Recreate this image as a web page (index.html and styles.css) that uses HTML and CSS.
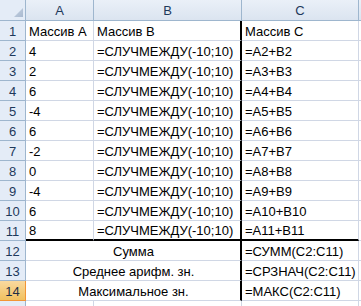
FILE: index.html
```html
<!DOCTYPE html>
<html lang="ru">

<head>
    <meta charset="UTF-8">
    <meta name="viewport" content="width=device-width, initial-scale=1.0">
    <title>Массивы</title>
    <link rel="stylesheet" href="styles.css">
</head>

<body>
    <div class="sheet">
        <!-- заголовки столбцов -->
        <div class="corner"></div>
        <div class="col-head">A</div>
        <div class="col-head">B</div>
        <div class="col-head">C</div>
        <div class="col-head"></div>

        <div class="row-head">1</div>
        <div class="cell">Массив А</div>
        <div class="cell split">Массив В</div>
        <div class="cell">Массив С</div>
        <div class="cell"></div>

        <div class="row-head">2</div>
        <div class="cell">4</div>
        <div class="cell split">=СЛУЧМЕЖДУ(-10;10)</div>
        <div class="cell">=A2+B2</div>
        <div class="cell"></div>

        <div class="row-head">3</div>
        <div class="cell">2</div>
        <div class="cell split">=СЛУЧМЕЖДУ(-10;10)</div>
        <div class="cell">=A3+B3</div>
        <div class="cell"></div>

        <div class="row-head">4</div>
        <div class="cell">6</div>
        <div class="cell split">=СЛУЧМЕЖДУ(-10;10)</div>
        <div class="cell">=A4+B4</div>
        <div class="cell"></div>

        <div class="row-head">5</div>
        <div class="cell">-4</div>
        <div class="cell split">=СЛУЧМЕЖДУ(-10;10)</div>
        <div class="cell">=A5+B5</div>
        <div class="cell"></div>

        <div class="row-head">6</div>
        <div class="cell">6</div>
        <div class="cell split">=СЛУЧМЕЖДУ(-10;10)</div>
        <div class="cell">=A6+B6</div>
        <div class="cell"></div>

        <div class="row-head">7</div>
        <div class="cell">-2</div>
        <div class="cell split">=СЛУЧМЕЖДУ(-10;10)</div>
        <div class="cell">=A7+B7</div>
        <div class="cell"></div>

        <div class="row-head">8</div>
        <div class="cell">0</div>
        <div class="cell split">=СЛУЧМЕЖДУ(-10;10)</div>
        <div class="cell">=A8+B8</div>
        <div class="cell"></div>

        <div class="row-head">9</div>
        <div class="cell">-4</div>
        <div class="cell split">=СЛУЧМЕЖДУ(-10;10)</div>
        <div class="cell">=A9+B9</div>
        <div class="cell"></div>

        <div class="row-head">10</div>
        <div class="cell">6</div>
        <div class="cell split">=СЛУЧМЕЖДУ(-10;10)</div>
        <div class="cell">=A10+B10</div>
        <div class="cell"></div>

        <div class="row-head">11</div>
        <div class="cell total-top">8</div>
        <div class="cell split total-top">=СЛУЧМЕЖДУ(-10;10)</div>
        <div class="cell total-top">=A11+B11</div>
        <div class="cell"></div>

        <div class="row-head">12</div>
        <div class="cell merged split">Сумма</div>
        <div class="cell">=СУММ(C2:C11)</div>
        <div class="cell"></div>

        <div class="row-head">13</div>
        <div class="cell merged split">Среднее арифм. зн.</div>
        <div class="cell">=СРЗНАЧ(C2:C11)</div>
        <div class="cell"></div>

        <div class="row-head active">14</div>
        <div class="cell merged split">Максимальное зн.</div>
        <div class="cell">=МАКС(C2:C11)</div>
        <div class="cell"></div>

        <!-- следующая строка видна лишь краем -->
        <div class="row-head"></div>
        <div class="cell"></div>
        <div class="cell"></div>
        <div class="cell"></div>
        <div class="cell"></div>
    </div>
</body>

</html>
```

FILE: styles.css
```css
body {
    margin: 0;
    background: #ffffff;
    font-family: "Liberation Sans", Arial, sans-serif;
    font-size: 13px;
    color: #000000;
}

.sheet {
    display: grid;
    grid-template-columns: 26px 68px 148px 117px 1fr;
    grid-template-rows: 21px;
    grid-auto-rows: 20px;
    width: 361px;
    height: 306px;
    overflow: hidden;
}

.sheet > div {
    box-sizing: border-box;
    line-height: 16px;
    white-space: nowrap;
    overflow: hidden;
}

.corner {
    position: relative;
    background: #e4ecf7;
    border-right: 1px solid #9eb6ce;
    border-bottom: 1px solid #9eb6ce;
}

/* серый треугольник выделения всего листа */
.corner::after {
    content: "";
    position: absolute;
    right: 2px;
    bottom: 3px;
    width: 9px;
    height: 9px;
    background: linear-gradient(135deg, #c5d2e3, #a9b9cf);
    clip-path: polygon(100% 0, 100% 100%, 0 100%);
}

.col-head {
    display: flex;
    align-items: flex-end;
    justify-content: center;
    padding-bottom: 1px;
    background: linear-gradient(#eaf0f8, #dbe4f0);
    border-right: 1px solid #9eb6ce;
    border-bottom: 1px solid #9eb6ce;
    color: #1e395b;
}

.row-head {
    display: flex;
    align-items: flex-end;
    justify-content: center;
    background: #e4ecf7;
    border-right: 1px solid #9eb6ce;
    border-bottom: 1px solid #9eb6ce;
    color: #1e395b;
}

.row-head.active {
    background: linear-gradient(#f9d99f, #f1c15f);
    border-right-color: #f29536;
    border-bottom-color: #f29536;
    color: #1e2e45;
}

.cell {
    display: flex;
    align-items: flex-end;
    padding: 0 2px 0 3px;
    border-right: 1px solid #d0d7e5;
    border-bottom: 1px solid #d0d7e5;
}

.cell.split {
    border-right: 2px solid #000000;
}

.cell.total-top {
    border-bottom: 2px solid #000000;
}

.cell.merged {
    grid-column: span 2;
    justify-content: center;
}
```
